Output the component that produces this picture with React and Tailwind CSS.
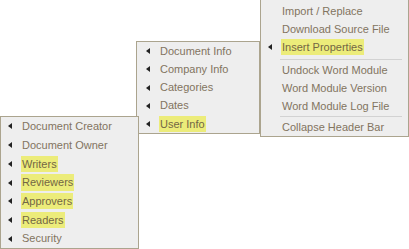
const subMenuA = [
  { label: "Document Creator" },
  { label: "Document Owner" },
  { label: "Writers", hl: true },
  { label: "Reviewers", hl: true },
  { label: "Approvers", hl: true },
  { label: "Readers", hl: true },
  { label: "Security" },
];

const subMenuB = [
  { label: "Document Info" },
  { label: "Company Info" },
  { label: "Categories" },
  { label: "Dates" },
  { label: "User Info", hl: true },
];

function Arrow() {
  return (
    <span className="absolute left-[7px] top-1/2 h-0 w-0 -translate-y-1/2 border-y-[3px] border-r-[4px] border-y-transparent border-r-[#222]" />
  );
}

function Item({ label, hl, arrow, className = "" }) {
  return (
    <div className={`relative flex items-center pl-[20px] ${className}`}>
      {arrow ? <Arrow /> : null}
      <span className={`px-[1px] ${hl ? "bg-[#ecec7a] text-[#736645]" : ""}`}>{label}</span>
    </div>
  );
}

function Separator({ className = "" }) {
  return <div className={`ml-[19px] mr-[6px] h-px bg-[#d2d2d2] ${className}`} />;
}

export default function App() {
  return (
    <div
      className="relative h-[249px] w-[409px] overflow-hidden bg-white text-[11px] text-[#82745f]"
      style={{ fontFamily: '"Liberation Sans", Arial, sans-serif' }}
    >
      {/* main menu */}
      <div className="absolute left-[260px] top-[-1px] z-10 flex w-[149px] flex-col border border-[#aba48e] bg-[#eeeeee] pt-[2px]">
        <Item label="Import / Replace" className="h-[18px]" />
        <Item label="Download Source File" className="h-[18px]" />
        <Item label="Insert Properties" hl arrow className="h-[18px]" />
        <Separator className="mt-[3px] mb-[1px]" />
        <Item label="Undock Word Module" className="h-[18px]" />
        <Item label="Word Module Version" className="h-[18px]" />
        <Item label="Word Module Log File" className="h-[18px]" />
        <Separator className="my-[1px]" />
        <Item label="Collapse Header Bar" className="h-[18px]" />
      </div>

      {/* insert properties submenu */}
      <div className="absolute left-[136px] top-[41px] flex h-[93px] w-[124px] flex-col border border-[#aba48e] bg-[#eeeeee] pl-[2px]">
        {subMenuB.map((it) => (
          <Item key={it.label} {...it} arrow className="flex-1" />
        ))}
      </div>

      {/* user info submenu */}
      <div className="absolute left-0 top-[116px] z-20 flex h-[133px] w-[139px] flex-col border border-[#aba48e] bg-[#eeeeee]">
        {subMenuA.map((it) => (
          <Item key={it.label} {...it} arrow className="flex-1" />
        ))}
      </div>
    </div>
  );
}
